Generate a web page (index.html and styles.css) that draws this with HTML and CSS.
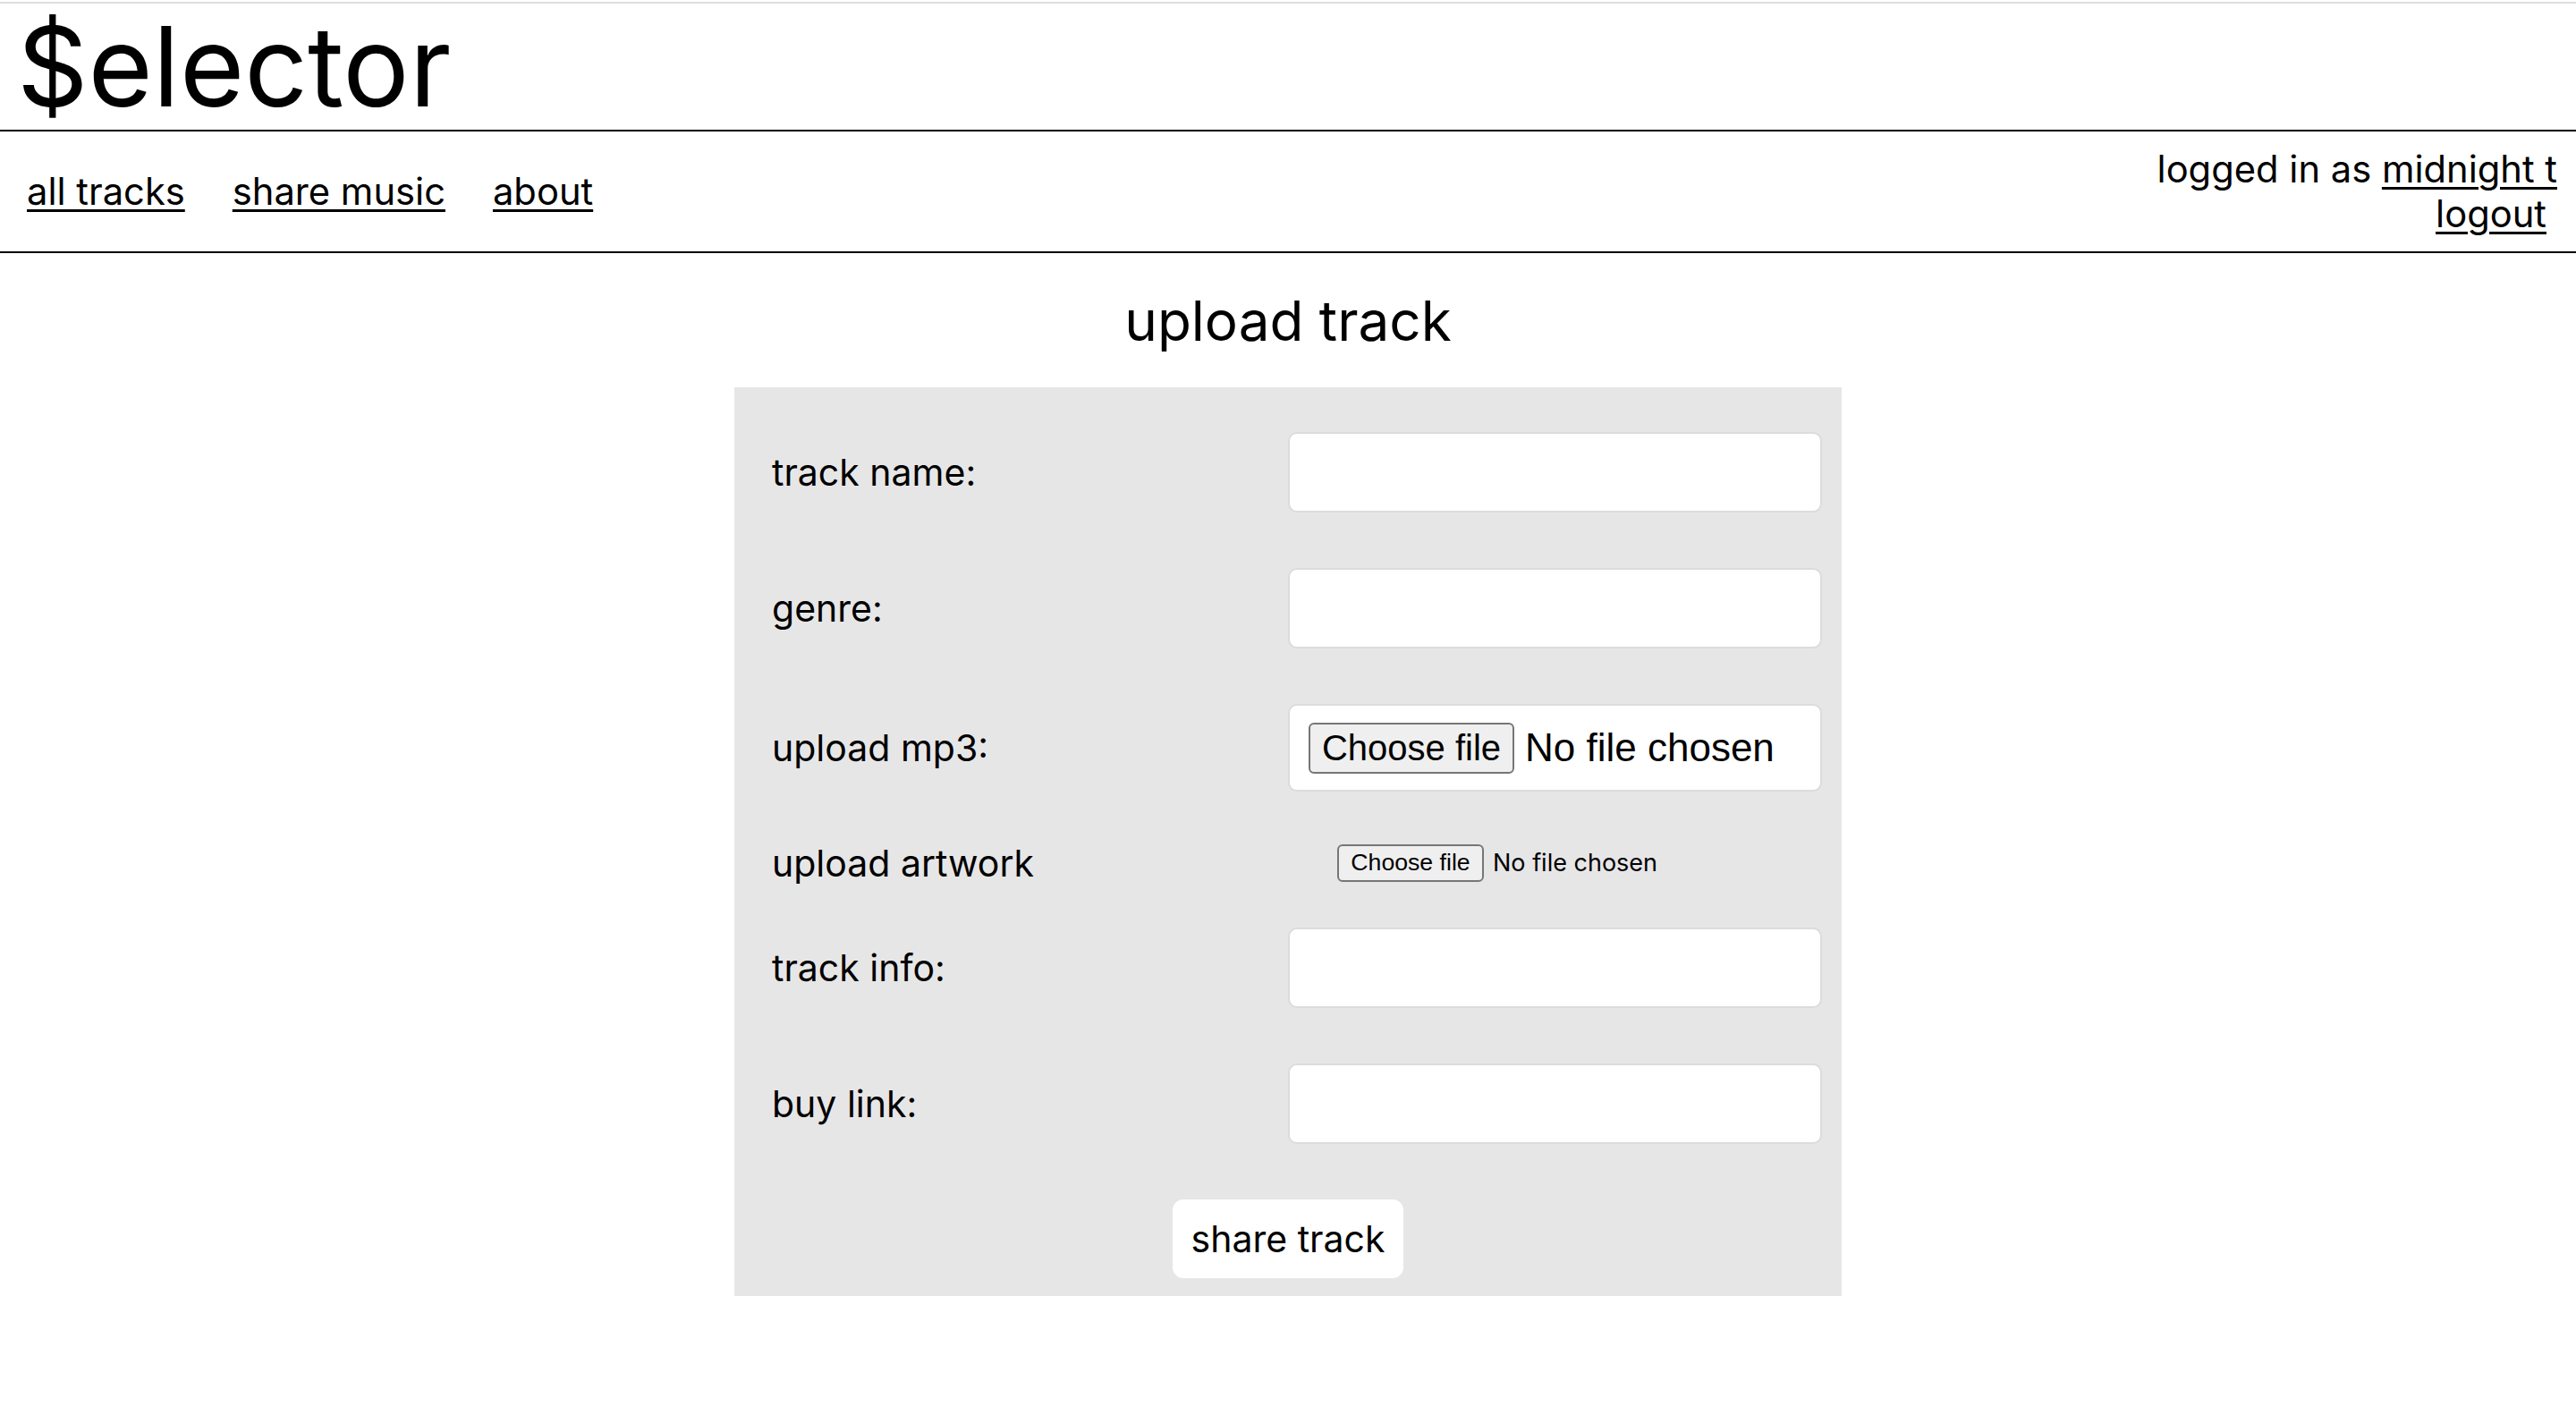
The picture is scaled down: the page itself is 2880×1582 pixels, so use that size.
FILE: index.html
```html
<!DOCTYPE html>
<html lang="en">
<head>
<meta charset="utf-8">
<title>$elector - upload track</title>
<link rel="stylesheet" href="styles.css">
</head>
<body>
<header class="masthead">
  <h1 class="logo">$elector</h1>
</header>
<nav class="topnav">
  <div class="navlinks">
    <a href="#">all tracks</a>
    <a href="#">share music</a>
    <a href="#">about</a>
  </div>
  <div class="session">
    <div>logged in as <a href="#">midnight t</a></div>
    <div><a class="logout" href="#">logout</a></div>
  </div>
</nav>
<main class="page">
  <h2 class="page-title">upload track</h2>
  <form class="upload">
    <div class="row">
      <label class="field-label" for="tn">track name:</label>
      <input class="text-input" id="tn" type="text">
    </div>
    <div class="row">
      <label class="field-label" for="ge">genre:</label>
      <input class="text-input" id="ge" type="text">
    </div>
    <div class="row row-mp3">
      <span class="field-label">upload mp3:</span>
      <label class="file-mp3">
        <input type="file" hidden>
        <span class="file-btn file-btn-lg">Choose file</span>
        <span class="file-status-lg">No file chosen</span>
      </label>
    </div>
    <div class="row row-art">
      <span class="field-label">upload artwork</span>
      <label class="file-art">
        <input type="file" hidden>
        <span class="file-btn file-btn-sm">Choose file</span>
        <span class="file-status-sm">No file chosen</span>
      </label>
    </div>
    <div class="row">
      <label class="field-label" for="ti">track info:</label>
      <input class="text-input" id="ti" type="text">
    </div>
    <div class="row">
      <label class="field-label" for="bl">buy link:</label>
      <input class="text-input" id="bl" type="text">
    </div>
    <div class="submit-row">
      <button class="share-btn" type="button">share track</button>
    </div>
  </form>
</main>
</body>
</html>
```

FILE: styles.css
```css
html, body {
  margin: 0;
  padding: 0;
  background: #fff;
}

body {
  padding-top: 2px;
  font-family: Inter, "Noto Sans", sans-serif;
  color: #000;
}

a {
  color: #000;
  text-decoration: underline;
  text-decoration-thickness: 3px;
  text-underline-offset: 5px;
}

.masthead {
  border-top: 2px solid #dedde3;
  border-bottom: 2px solid #000;
  height: 141px;
}

.logo {
  margin: 0;
  padding: 8px 0 0 19px;
  font-size: 124px;
  font-weight: 400;
  line-height: 124px;
}

.topnav {
  display: flex;
  justify-content: space-between;
  align-items: center;
  height: 134px;
  padding: 0 21px 0 30px;
  border-bottom: 2px solid #000;
  font-size: 41.7px;
}

.navlinks {
  display: flex;
  gap: 53px;
}

.session {
  text-align: right;
  line-height: 50px;
}

.logout {
  margin-right: 12px;
}

.page {
  display: flex;
  flex-direction: column;
  align-items: center;
}

.page-title {
  margin: 38px 0 37px;
  font-size: 62px;
  font-weight: 400;
}

.upload {
  width: 1238px;
  box-sizing: border-box;
  background: #e7e6e7;
  padding: 50px 21px 20px;
  display: flex;
  flex-direction: column;
  gap: 62px;
}

.row {
  display: flex;
  align-items: center;
  height: 90px;
}

.row-mp3 {
  height: 98px;
}

.row-art {
  height: 28px;
  box-sizing: border-box;
  padding-top: 7px;
}

.field-label {
  width: 598px;
  flex: none;
  box-sizing: border-box;
  padding-left: 21px;
  font-size: 41px;
}

.text-input {
  width: 597px;
  height: 90px;
  box-sizing: border-box;
  border: 2px solid #dcdcdc;
  border-radius: 10px;
  background: #fff;
  margin: 0;
  font-size: 40px;
  font-family: Inter, sans-serif;
}

.file-mp3 {
  display: flex;
  align-items: center;
  width: 597px;
  height: 98px;
  box-sizing: border-box;
  padding: 0 21px;
  border: 2px solid #dcdcdc;
  border-radius: 10px;
  background: #fff;
}

.file-btn {
  display: inline-flex;
  align-items: center;
  justify-content: center;
  box-sizing: border-box;
  border: 2px solid #767676;
  border-radius: 6px;
  background: #efefef;
  color: #000;
  font-family: "Liberation Sans", Arial, sans-serif;
  white-space: nowrap;
}

.file-btn-lg {
  width: 230px;
  height: 57px;
  font-size: 40px;
}

.file-status-lg {
  margin-left: 12px;
  font-family: "Liberation Sans", Arial, sans-serif;
  font-size: 44px;
  white-space: nowrap;
}

.file-art {
  display: flex;
  align-items: center;
  margin-left: 55px;
}

.file-btn-sm {
  width: 164px;
  height: 42px;
  font-size: 26.67px;
}

.file-status-sm {
  margin-left: 10px;
  font-family: Inter, sans-serif;
  font-size: 27px;
  white-space: nowrap;
}

.submit-row {
  display: flex;
  justify-content: center;
}

.share-btn {
  height: 88px;
  padding: 0 21px;
  border: none;
  border-radius: 12px;
  background: #fff;
  font-family: Inter, sans-serif;
  font-size: 41px;
  color: #000;
}
```
